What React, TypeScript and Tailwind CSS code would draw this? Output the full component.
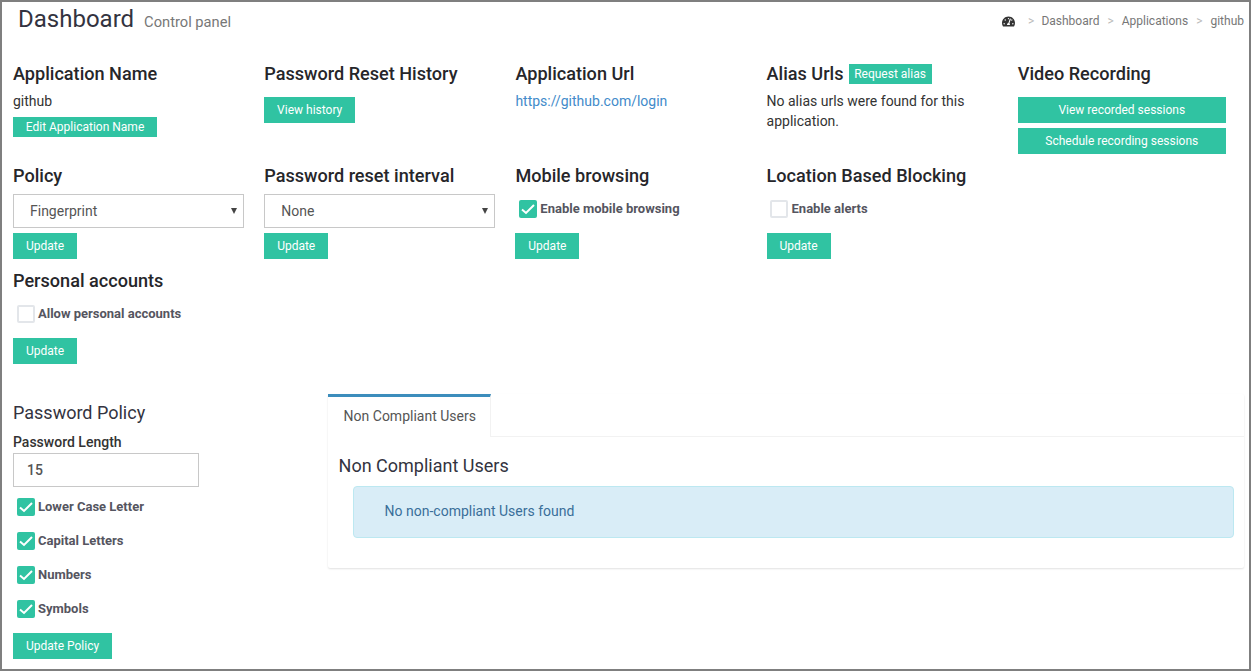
// @ts-nocheck
import { FaTachometerAlt } from 'react-icons/fa';

const btn = 'block h-[26px] bg-[#30c3a2] text-white text-[12px] leading-[26px] text-center';
const heading = 'text-[18.1px] leading-[20px] font-medium text-[#26262a]';

function Update({ className = 'mt-[5px]' }) {
  return <button className={`${btn} w-[64px] ${className}`}>Update</button>;
}

function Check({ checked = false, label }) {
  return (
    <label className="flex items-center h-[18px] ml-[3.8px]">
      {checked ? (
        <span className="w-[18px] h-[18px] rounded-[2px] bg-[#30c3a2] flex items-center justify-center">
          <svg width="14" height="12" viewBox="0 0 14 12" fill="none">
            <path d="M1 6.5 L5 10 L13 2" stroke="#fff" strokeWidth="2" />
          </svg>
        </span>
      ) : (
        <span className="w-[18px] h-[18px] rounded-[2px] bg-white border-2 border-[#e3e6ea]" />
      )}
      <span className="ml-[3.2px] text-[13px] font-bold text-[#555560]">{label}</span>
    </label>
  );
}

function Select({ value }) {
  return (
    <div className="mt-[8px] w-[231px] h-[34px] border border-[#c8c8c8] flex items-center justify-between pl-4 pr-[6px] text-[14px] text-[#555]">
      <span>{value}</span>
      <span className="w-0 h-0 border-x-[3.5px] border-x-transparent border-t-[6px] border-t-[#444]" />
    </div>
  );
}

export default function App() {
  return (
    <div className="w-[1251px] h-[671px] border-2 border-[#7f7f7f] bg-white overflow-hidden font-['Roboto',sans-serif] text-[14px] text-[#333]">
      <div className="flex items-start justify-between h-[62px] pl-4 pr-[5px]">
        <div className="flex items-baseline pt-[3px]">
          <span className="text-[24px] leading-[29px] text-[#333340]">Dashboard</span>
          <span className="ml-[10px] text-[14.7px] text-[#777]">Control panel</span>
        </div>
        <div className="flex items-center pt-[12px] text-[12px] leading-[14px] text-[#777]">
          <FaTachometerAlt className="w-[13px] h-[13px] text-[#333]" />
          <span className="ml-[13px] text-[#bbb]">&gt;</span>
          <span className="ml-[7px]">Dashboard</span>
          <span className="ml-[8px] text-[#bbb]">&gt;</span>
          <span className="ml-[8px]">Applications</span>
          <span className="ml-[8px] text-[#bbb]">&gt;</span>
          <span className="ml-[8px]">github</span>
        </div>
      </div>

      <div className="pl-[11px]">
        <div className="grid grid-cols-[repeat(5,251.2px)] h-[102px]">
          <div>
            <h3 className={heading}>Application Name</h3>
            <p className="mt-[7px] leading-[20px]">github</p>
            <button className="block mt-[6px] w-[144px] h-[20px] bg-[#30c3a2] text-white text-[12px] leading-[20px] text-center">Edit Application Name</button>
          </div>
          <div>
            <h3 className={heading}>Password Reset History</h3>
            <button className={`${btn} mt-[13px] w-[91px]`}>View history</button>
          </div>
          <div>
            <h3 className={heading}>Application Url</h3>
            <a className="block mt-[7px] leading-[20px] text-[#428bca]">https://github.com/login</a>
          </div>
          <div>
            <div className="flex items-center h-[20px]">
              <h3 className={heading}>Alias Urls</h3>
              <span className="ml-[5px] h-[20px] w-[83px] bg-[#30c3a2] text-white text-[12px] leading-[20px] text-center">Request alias</span>
            </div>
            <p className="mt-[7px] w-[220px] leading-[20px]">No alias urls were found for this application.</p>
          </div>
          <div>
            <h3 className={heading}>Video Recording</h3>
            <button className={`${btn} mt-[13px] w-[208px]`}>View recorded sessions</button>
            <button className={`${btn} mt-[5px] w-[208px]`}>Schedule recording sessions</button>
          </div>
        </div>

        <div className="grid grid-cols-[repeat(5,251.2px)] h-[105px]">
          <div>
            <h3 className={heading}>Policy</h3>
            <Select value="Fingerprint" />
            <Update />
          </div>
          <div>
            <h3 className={heading}>Password reset interval</h3>
            <Select value="None" />
            <Update />
          </div>
          <div>
            <h3 className={heading}>Mobile browsing</h3>
            <div className="mt-[14px]"><Check checked label="Enable mobile browsing" /></div>
            <Update className="mt-[15px]" />
          </div>
          <div>
            <h3 className={heading}>Location Based Blocking</h3>
            <div className="mt-[14px]"><Check label="Enable alerts" /></div>
            <Update className="mt-[15px]" />
          </div>
        </div>

        <div className="h-[120px]">
          <h3 className={heading}>Personal accounts</h3>
          <div className="mt-[14px]"><Check label="Allow personal accounts" /></div>
          <Update className="mt-[15px]" />
        </div>

        <div className="flex">
          <div className="w-[315px] pt-[12px]">
            <h3 className="text-[18px] leading-[20px] font-normal text-[#333340]">Password Policy</h3>
            <p className="mt-[11px] text-[14px] leading-[16px] font-medium text-[#333]">Password Length</p>
            <div className="mt-[3px] w-[186px] h-[34px] border border-[#c8c8c8] flex items-center pl-[13px] text-[14px] font-medium text-[#555]">15</div>
            <div className="mt-[11px] flex flex-col gap-4">
              <Check checked label="Lower Case Letter" />
              <Check checked label="Capital Letters" />
              <Check checked label="Numbers" />
              <Check checked label="Symbols" />
            </div>
            <button className={`${btn} mt-[15px] w-[99px]`}>Update Policy</button>
          </div>

          <div className="w-[916px] h-[174px] bg-white shadow-[0_1px_2px_rgba(0,0,0,0.12)] rounded-[2px] mt-[3px]">
            <div className="h-[43px] border-b border-[#f2f2f2] flex">
              <div className="w-[163px] h-[43px] border-t-[3px] border-t-[#3c8dbc] border-r border-r-[#f2f2f2] bg-white text-[14px] text-[#555] pl-[15.6px] pt-[7px] leading-[24px]">Non Compliant Users</div>
            </div>
            <h4 className="ml-[10.6px] mt-[19px] text-[18px] leading-[20px] text-[#333340]">Non Compliant Users</h4>
            <div className="ml-[25px] mt-[10px] w-[881px] h-[52px] rounded-[4px] bg-[#d9edf7] border border-[#bce8f1] text-[14px] leading-[48px] pl-[30.6px] text-[#3a6f9a]">No non-compliant Users found</div>
          </div>
        </div>
      </div>
    </div>
  );
}
